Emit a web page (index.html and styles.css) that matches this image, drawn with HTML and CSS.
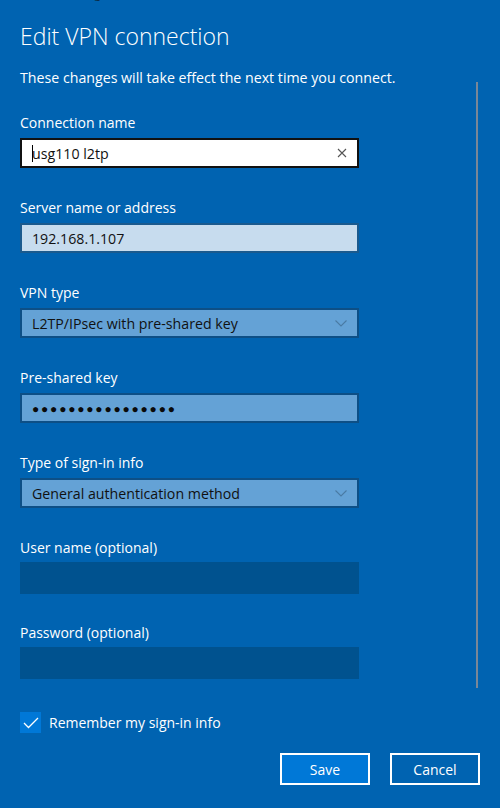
FILE: index.html
```html
<!DOCTYPE html>
<html>
<head>
<meta charset="utf-8">
<link rel="stylesheet" href="styles.css">
</head>
<body>
<div class="window">
  <div class="titlebar">
    <div class="titlebar-inner">
      <span class="tb-back">&#8592;</span>
      <span class="tb-title">Settings</span>
      <span class="tb-spacer"></span>
      <span class="tb-btn">&#9633;</span>
      <span class="tb-btn">&#10005;</span>
    </div>
  </div>
  <main class="content">
    <h1 class="title">Edit VPN connection</h1>
    <p class="note">These changes will take effect the next time you connect.</p>

    <div class="field">
      <div class="label">Connection name</div>
      <div class="box box-focus">
        <span class="caret"></span><span class="value">usg110 l2tp</span>
        <svg class="clear" width="10" height="10" viewBox="0 0 10 10"><path d="M1 1 L9 9 M9 1 L1 9" stroke="#555" stroke-width="1.1" fill="none"/></svg>
      </div>
    </div>

    <div class="field">
      <div class="label">Server name or address</div>
      <div class="box box-light"><span class="value">192.168.1.107</span></div>
    </div>

    <div class="field">
      <div class="label">VPN type</div>
      <div class="box box-mid"><span class="value">L2TP/IPsec with pre-shared key</span>
        <svg class="chev" width="12" height="7" viewBox="0 0 12 7"><path d="M0.5 0.5 L6 6 L11.5 0.5" stroke="#4a7aa3" stroke-width="1.1" fill="none"/></svg>
      </div>
    </div>

    <div class="field">
      <div class="label">Pre-shared key</div>
      <div class="box box-mid"><span class="value dots">&#9679;&#9679;&#9679;&#9679;&#9679;&#9679;&#9679;&#9679;&#9679;&#9679;&#9679;&#9679;&#9679;&#9679;&#9679;&#9679;</span></div>
    </div>

    <div class="field">
      <div class="label">Type of sign-in info</div>
      <div class="box box-mid"><span class="value">General authentication method</span>
        <svg class="chev" width="12" height="7" viewBox="0 0 12 7"><path d="M0.5 0.5 L6 6 L11.5 0.5" stroke="#4a7aa3" stroke-width="1.1" fill="none"/></svg>
      </div>
    </div>

    <div class="field">
      <div class="label">User name (optional)</div>
      <div class="box box-dark"></div>
    </div>

    <div class="field">
      <div class="label">Password (optional)</div>
      <div class="box box-dark"></div>
    </div>

    <div class="check">
      <span class="checkbox">
        <svg width="16" height="12" viewBox="0 0 16 12"><path d="M1 6 L5.5 10.5 L15 1" stroke="#fff" stroke-width="1.3" fill="none"/></svg>
      </span>
      <span class="check-label">Remember my sign-in info</span>
    </div>

    <div class="actions">
      <button class="btn btn-primary">Save</button>
      <button class="btn">Cancel</button>
    </div>
  </main>
  <div class="scrollbar"></div>
</div>
</body>
</html>
```

FILE: styles.css
```css
* { box-sizing: border-box; }
html, body {
  margin: 0;
  padding: 0;
  width: 500px;
  height: 808px;
  overflow: hidden;
  background: #0063b1;
}
body {
  font-family: "Open Sans", "Noto Sans", sans-serif;
  color: #fff;
}
.window {
  position: relative;
  width: 500px;
  height: 808px;
  display: flex;
  flex-direction: column;
}
.titlebar {
  height: 4px;
  overflow: hidden;
  position: relative;
}
.titlebar-inner {
  display: flex;
  align-items: flex-end;
  height: 20px;
  margin-top: -16px;
  font-size: 12px;
  color: #0a2a45;
  padding: 0 20px;
  line-height: 20px;
}
.tb-back { width: 42px; }
.tb-spacer { flex: 1; }
.tb-btn { width: 46px; text-align: center; }

.content {
  padding: 0 20px;
  display: flex;
  flex-direction: column;
}
.title {
  margin: 16px 0 0;
  font-size: 23px;
  font-weight: 300;
  line-height: 32px;
}
.note {
  margin: 16px 0 0;
  font-size: 14.2px;
  line-height: 20px;
}
.field {
  display: flex;
  flex-direction: column;
  width: 339px;
}
.field:first-of-type { margin-top: 25px; }
.field + .field { margin-top: 30px; }
.label {
  font-size: 14px;
  line-height: 20px;
}
.box {
  margin-top: 5px;
  height: 30px;
  border: 2px solid #0a4a7c;
  display: flex;
  align-items: center;
  padding: 0 10px;
  font-size: 14.2px;
  color: #111;
  position: relative;
}
.box-focus {
  background: #fff;
  border-color: #111;
}
.caret {
  display: inline-block;
  width: 1px;
  height: 17px;
  background: #000;
  margin-right: -1px;
}
.box-focus .value { flex: 1; }
.box-light { background: #c7dcee; border-color: #1a5a8e; }
.box-mid { background: #64a2d6; border-color: #0d4f86; justify-content: space-between; }
.box-dark {
  background: #00528f;
  border-color: #00528f;
  height: 32px;
  margin-top: 4px;
  margin-bottom: -1px;
}
.dots { font-size: 12px; letter-spacing: 1.8px; color: #0a0a0a; }

.check {
  margin-top: 34px;
  display: flex;
  align-items: center;
  gap: 8px;
}
.checkbox {
  width: 21px;
  height: 21px;
  background: #0078d7;
  display: flex;
  align-items: center;
  justify-content: center;
}
.check-label {
  font-size: 14px;
  line-height: 20px;
}
.actions {
  margin-top: 20px;
  display: flex;
  justify-content: flex-end;
  gap: 20px;
}
.btn {
  width: 90px;
  height: 32px;
  border: 2px solid #fff;
  background: transparent;
  color: #fff;
  font-family: "Open Sans", "Noto Sans", sans-serif;
  font-size: 14px;
  padding: 0;
}
.btn-primary { background: #0078d7; }
.scrollbar {
  position: absolute;
  left: 476px;
  top: 82px;
  width: 2px;
  height: 606px;
  background: #7a8797;
}
```
